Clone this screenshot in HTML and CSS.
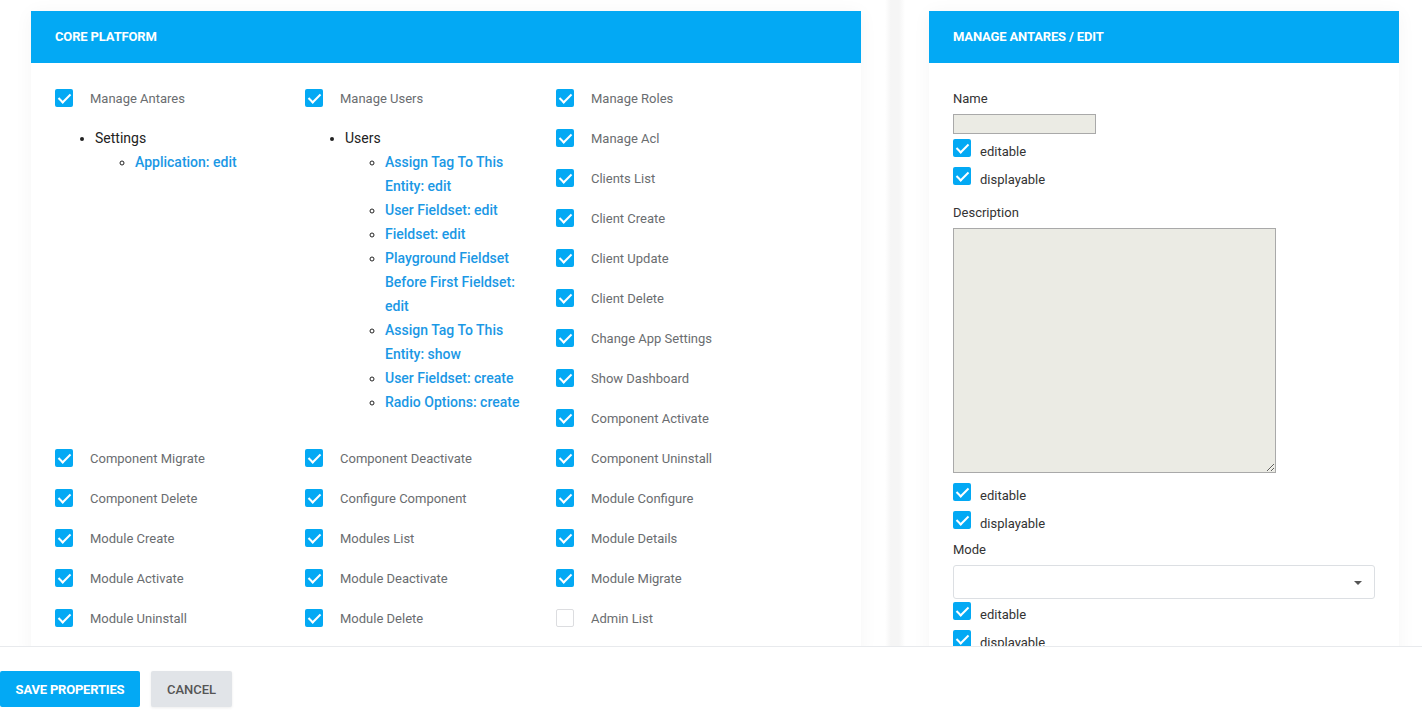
FILE: index.html
```html
<!DOCTYPE html>
<html lang="en">
<head>
<meta charset="utf-8">
<title>Manage Antares / Edit</title>
<link rel="stylesheet" href="styles.css">
</head>
<body>
<div class="page">
  <div class="scroll">
    <div class="cols">
      <section class="card card-left">
        <header class="card-head">Core Platform</header>
        <div class="card-body perms">
          <div class="top">
            <div class="col">
              <label class="perm"><span class="cb on"></span><span class="perm-text">Manage Antares</span></label>
              <ul class="tree">
                <li>Settings
                  <ul>
                    <li><a href="#">Application: edit</a></li>
                  </ul>
                </li>
              </ul>
            </div>
            <div class="col">
              <label class="perm"><span class="cb on"></span><span class="perm-text">Manage Users</span></label>
              <ul class="tree">
                <li>Users
                  <ul>
                    <li><a href="#">Assign Tag To This Entity: edit</a></li>
                    <li><a href="#">User Fieldset: edit</a></li>
                    <li><a href="#">Fieldset: edit</a></li>
                    <li><a href="#">Playground Fieldset Before First Fieldset: edit</a></li>
                    <li><a href="#">Assign Tag To This Entity: show</a></li>
                    <li><a href="#">User Fieldset: create</a></li>
                    <li><a href="#">Radio Options: create</a></li>
                  </ul>
                </li>
              </ul>
            </div>
            <div class="col">
              <label class="perm"><span class="cb on"></span><span class="perm-text">Manage Roles</span></label>
              <label class="perm"><span class="cb on"></span><span class="perm-text">Manage Acl</span></label>
              <label class="perm"><span class="cb on"></span><span class="perm-text">Clients List</span></label>
              <label class="perm"><span class="cb on"></span><span class="perm-text">Client Create</span></label>
              <label class="perm"><span class="cb on"></span><span class="perm-text">Client Update</span></label>
              <label class="perm"><span class="cb on"></span><span class="perm-text">Client Delete</span></label>
              <label class="perm"><span class="cb on"></span><span class="perm-text">Change App Settings</span></label>
              <label class="perm"><span class="cb on"></span><span class="perm-text">Show Dashboard</span></label>
              <label class="perm"><span class="cb on"></span><span class="perm-text">Component Activate</span></label>
            </div>
          </div>
          <div class="grid">
            <label class="perm"><span class="cb on"></span><span class="perm-text">Component Migrate</span></label>
            <label class="perm"><span class="cb on"></span><span class="perm-text">Component Deactivate</span></label>
            <label class="perm"><span class="cb on"></span><span class="perm-text">Component Uninstall</span></label>
            <label class="perm"><span class="cb on"></span><span class="perm-text">Component Delete</span></label>
            <label class="perm"><span class="cb on"></span><span class="perm-text">Configure Component</span></label>
            <label class="perm"><span class="cb on"></span><span class="perm-text">Module Configure</span></label>
            <label class="perm"><span class="cb on"></span><span class="perm-text">Module Create</span></label>
            <label class="perm"><span class="cb on"></span><span class="perm-text">Modules List</span></label>
            <label class="perm"><span class="cb on"></span><span class="perm-text">Module Details</span></label>
            <label class="perm"><span class="cb on"></span><span class="perm-text">Module Activate</span></label>
            <label class="perm"><span class="cb on"></span><span class="perm-text">Module Deactivate</span></label>
            <label class="perm"><span class="cb on"></span><span class="perm-text">Module Migrate</span></label>
            <label class="perm"><span class="cb on"></span><span class="perm-text">Module Uninstall</span></label>
            <label class="perm"><span class="cb on"></span><span class="perm-text">Module Delete</span></label>
            <label class="perm"><span class="cb"></span><span class="perm-text">Admin List</span></label>
          </div>
        </div>
      </section>
      <div class="gutter"></div>
      <section class="card card-right">
        <header class="card-head">Manage Antares / Edit</header>
        <div class="card-body form">
          <div class="field">
            <div class="field-label">Name</div>
            <input class="input-name" type="text" disabled>
            <label class="opt opt-first"><span class="cb on"></span><span class="opt-text">editable</span></label>
            <label class="opt"><span class="cb on"></span><span class="opt-text">displayable</span></label>
          </div>
          <div class="field field-desc">
            <div class="field-label">Description</div>
            <textarea class="input-desc" disabled></textarea>
            <label class="opt"><span class="cb on"></span><span class="opt-text">editable</span></label>
            <label class="opt"><span class="cb on"></span><span class="opt-text">displayable</span></label>
          </div>
          <div class="field field-mode">
            <div class="field-label">Mode</div>
            <div class="select"><span class="caret"></span></div>
            <label class="opt opt-tight"><span class="cb on"></span><span class="opt-text">editable</span></label>
            <label class="opt"><span class="cb on"></span><span class="opt-text">displayable</span></label>
          </div>
        </div>
      </section>
    </div>
  </div>
  <footer class="actions">
    <button class="btn btn-primary" type="button">Save Properties</button>
    <button class="btn btn-default" type="button">Cancel</button>
  </footer>
</div>
</body>
</html>
```

FILE: styles.css
```css
* { box-sizing: border-box; }

html, body {
  margin: 0;
  padding: 0;
  background: #fff;
  font-family: Roboto, "Liberation Sans", Arial, sans-serif;
}

.page {
  width: 1422px;
  height: 727px;
  overflow: hidden;
}

.scroll {
  height: 647px;
  overflow: hidden;
  border-bottom: 1px solid #e8eaed;
}

.cols {
  display: flex;
  align-items: flex-start;
  padding: 11px 23px 0 31px;
  gap: 24px;
}

.gutter {
  width: 20px;
  height: 700px;
  margin-top: -11px;
  background: linear-gradient(to right, #fff, #f5f5f5 30%, #f5f5f5 70%, #fff);
}

.card {
  background: #fff;
  box-shadow: 0 2px 18px rgba(0, 0, 0, 0.045);
}

.card-left { width: 830px; flex: none; }
.card-right { width: 470px; flex: none; }

.card-head {
  height: 52px;
  background: #03a9f4;
  color: #fff;
  font-size: 13px;
  font-weight: 700;
  text-transform: uppercase;
  line-height: 52px;
  padding: 0 24px;
  letter-spacing: -0.15px;
}

/* permissions */
.perms {
  padding: 15px 24px 20px;
}

.top {
  display: grid;
  grid-template-columns: 250px 251px 250px;
  align-items: start;
}

.col { padding-right: 30px; }

.grid {
  display: grid;
  grid-template-columns: 250px 251px 250px;
}

.perm {
  display: flex;
  align-items: center;
  height: 40px;
}

.perm .cb { margin-right: 17px; }

.perm-text {
  font-size: 13px;
  color: #6a6d70;
  white-space: nowrap;
}

.cb {
  width: 18px;
  height: 18px;
  flex: none;
  border-radius: 2px;
  border: 1.5px solid #dcdde0;
  background: #fff;
  position: relative;
}

.cb.on {
  border: none;
  background: #03a9f4;
}

.cb.on::after {
  content: "";
  position: absolute;
  left: 6px;
  top: 2px;
  width: 5px;
  height: 10px;
  border-right: 2px solid #fff;
  border-bottom: 2px solid #fff;
  transform: rotate(45deg);
}

.tree {
  margin: 8px 0 0;
  padding-left: 40px;
  font-size: 14px;
  line-height: 24px;
  color: #222;
}

.tree ul {
  margin: 0;
  padding-left: 40px;
  list-style: circle;
}

.tree a {
  color: #1b98e5;
  font-weight: 500;
  text-decoration: none;
}

/* form */
.form {
  padding: 28px 24px 20px;
}

.field-label {
  font-size: 13px;
  line-height: 16px;
  color: #333;
  margin-bottom: 7px;
}

.field-desc { margin-top: 20px; }
.field-mode { margin-top: 13px; }

.input-name {
  display: block;
  width: 143px;
  height: 20px;
  margin: 0;
  border: 1px solid #a9a9a9;
  background: #ebebe4;
  padding: 0;
}

.input-desc {
  display: block;
  width: 323px;
  height: 245px;
  margin: 0;
  border: 1px solid #a9a9a9;
  background: #ebebe4;
  padding: 0;
  resize: both;
}

.select {
  position: relative;
  height: 34px;
  border: 1px solid #dcdfe3;
  border-radius: 3px;
  background: #fff;
}

.caret {
  position: absolute;
  right: 12px;
  top: 15px;
  width: 0;
  height: 0;
  border-left: 4px solid transparent;
  border-right: 4px solid transparent;
  border-top: 4px solid #555;
}

.opt {
  display: flex;
  align-items: flex-end;
  height: 18px;
  margin-top: 10px;
}

.opt-first { margin-top: 5px; }
.opt-tight { margin-top: 3px; }

.opt .cb { margin-right: 9px; }

.opt-text {
  font-size: 13px;
  color: #333;
  line-height: 14px;
  margin-bottom: -2px;
}

/* footer */
.actions {
  display: flex;
  gap: 11px;
  padding-top: 24px;
}

.btn {
  height: 36px;
  border: none;
  border-radius: 2px;
  font-family: Roboto, "Liberation Sans", Arial, sans-serif;
  text-transform: uppercase;
  cursor: pointer;
}

.btn-primary {
  background: #03a9f4;
  color: #fff;
  font-weight: 700;
  font-size: 13px;
  padding: 0 10px;
  width: 140px;
  letter-spacing: -0.2px;
}

.btn-default {
  background: #e1e4e8;
  color: #555;
  font-weight: 500;
  padding: 0 14px;
  width: 81px;
  box-shadow: 0 1px 3px rgba(0, 0, 0, 0.08);
  font-size: 13px;
}
```
